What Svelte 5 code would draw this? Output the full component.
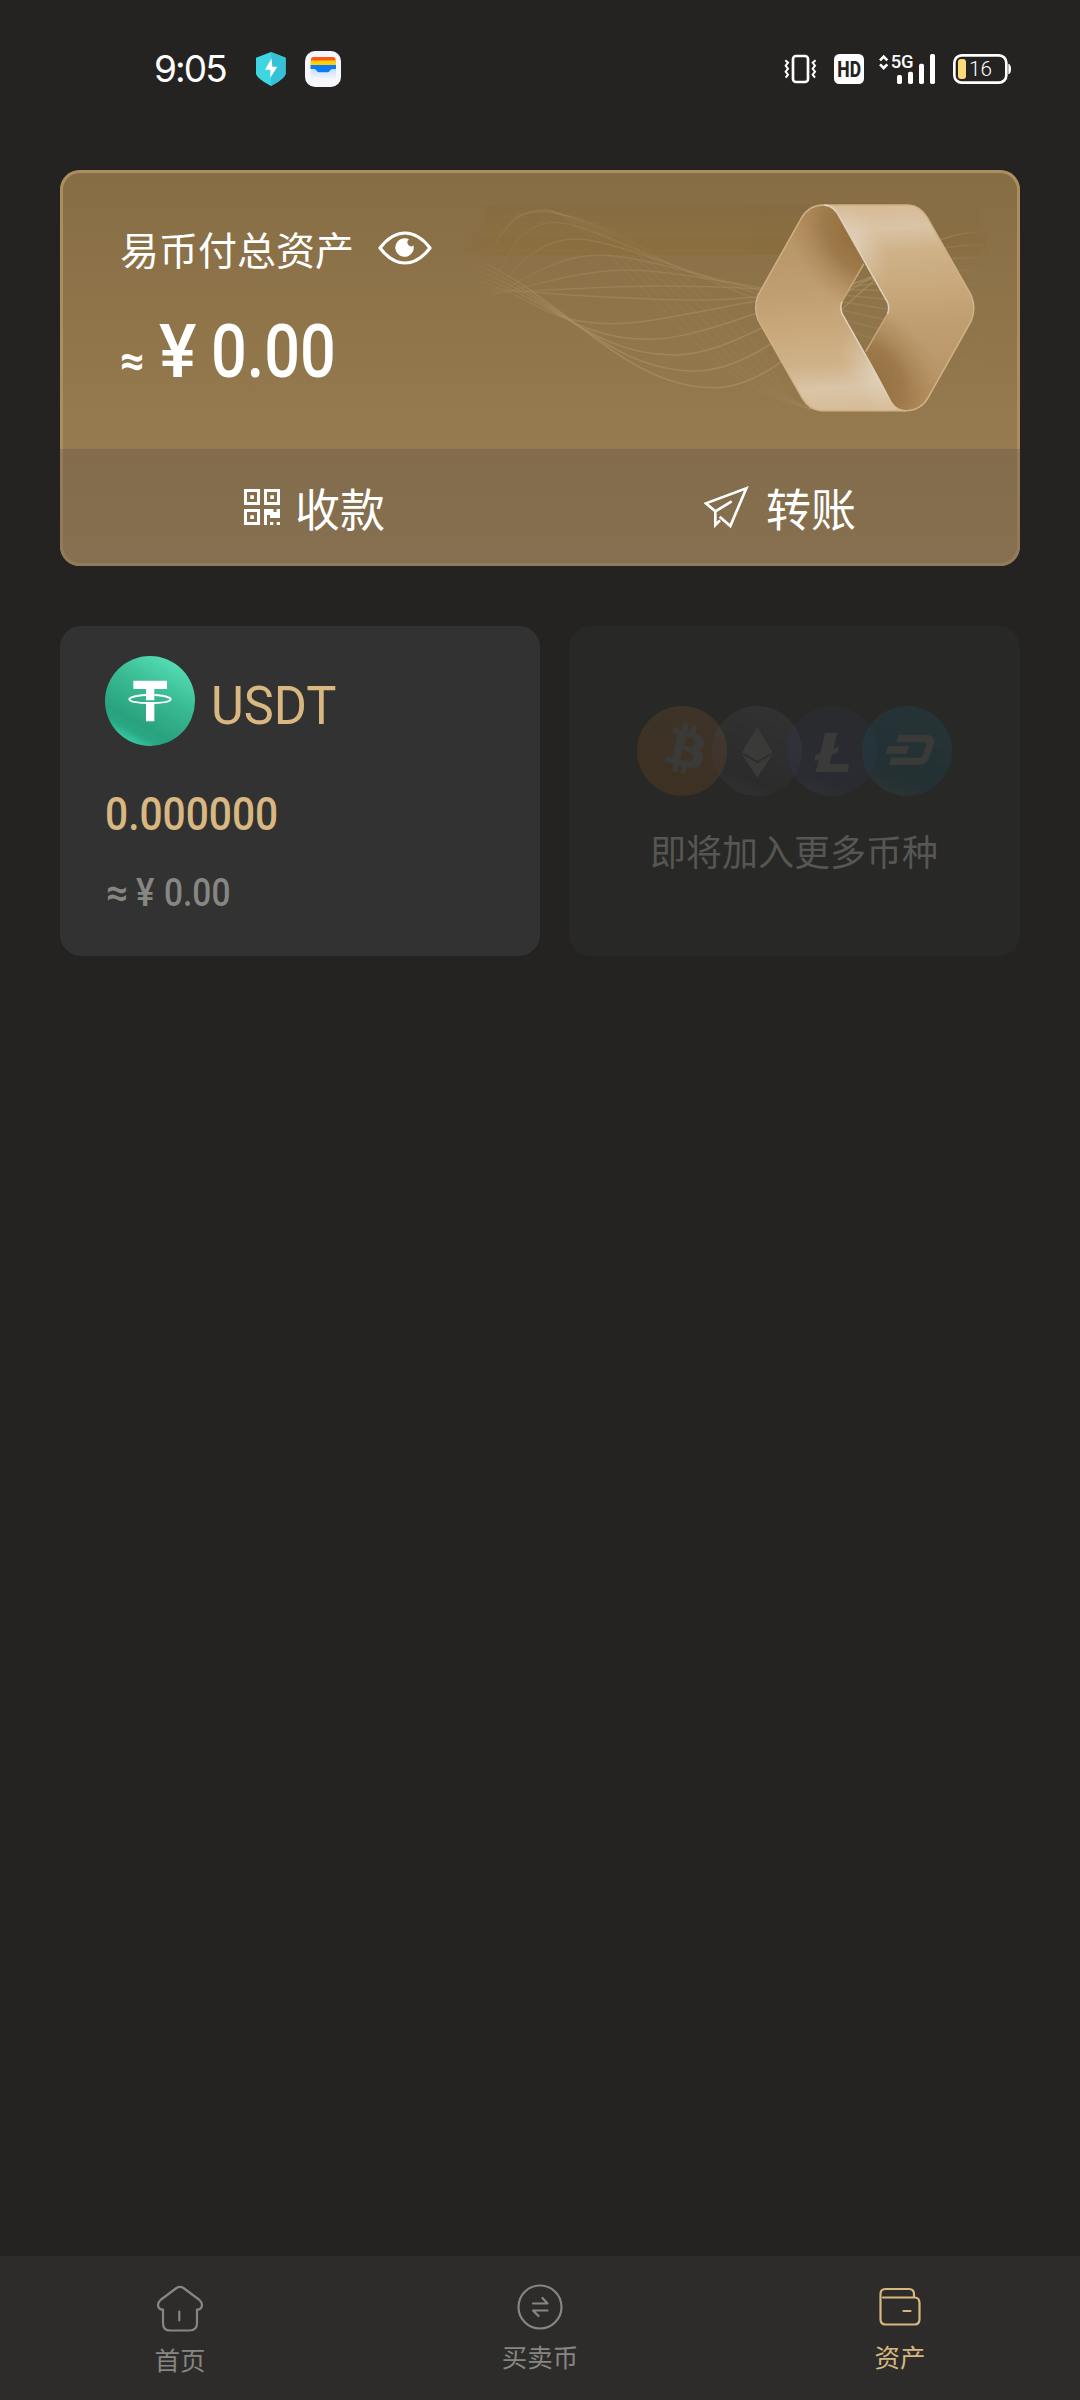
<script>
  const lerp = (a, b, t) => a + (b - a) * t;

  // crest / trough of every line in the main wave, left to right
  const crests = [
    [300, 187], [355, 237], [420, 286], [490, 331], [575, 378],
    [690, 420], [450, 491], [545, 538], [610, 585], [665, 633], [715, 683]
  ];

  const waves = crests.map(([x, y], i) => {
    const t = i / (crests.length - 1);
    const sx = lerp(85, 70, t);
    const sy = lerp(470, 285, t);
    const c1x = lerp(150, 320, t);
    const c1y = lerp(400, 400, t);
    const ey = lerp(610, 215, t);
    const dx = lerp(130, 240, t);
    return {
      d: `M${sx} ${sy}C${c1x} ${c1y} ${x - dx} ${y} ${x} ${y}S${lerp(850, 1130, t)} ${lerp(500, 215, t)} 1420 ${ey}`,
      opacity: lerp(0.28, 0.7, t)
    };
  });

  const threads = Array.from({ length: 7 }, (_, i) => {
    const t = i / 6;
    return `M${120 + i * 5} ${310 - i * 10}C${160 + i * 3} ${200 - i * 5} 210 ${150 - i} ${270 + i * 5} ${148 + i * 2}S${lerp(450, 560, t)} ${lerp(290, 250, t)} ${lerp(600, 740, t)} ${lerp(470, 450, t)}S850 ${lerp(720, 690, t)} 970 748`;
  });

  const tabs = [
    { id: "home", label: "首页" },
    { id: "trade", label: "买卖币" },
    { id: "assets", label: "资产" }
  ];

  let active = "assets";
</script>

<div class="screen">
  <header class="status">
    <span class="time">9:05</span>
    <svg class="shield" width="30" height="36" viewBox="378 66 90 108">
      <path fill="#3fd6e4" d="M423 69 467 86V133Q467 147 423 171 378 147 378 133V86Z" />
      <path fill="#35c1d6" d="M423 69 467 86V133Q467 147 423 171Z" />
      <path fill="#fff" d="M425 88 405 122H421L421 146 442 113H427Z" />
    </svg>
    <svg class="wallet-app" width="36" height="36" viewBox="0 0 36 36">
      <defs>
        <linearGradient id="flap" x2="0" y2="1">
          <stop stop-color="#b9d6fb" />
          <stop offset="1" stop-color="#f5f7fc" />
        </linearGradient>
      </defs>
      <rect width="36" height="36" rx="10" fill="#f6f7fc" />
      <path fill="#fa5a12" d="M6 12V8.500q0-2.500 2.500-2.500H28q2.500 0 2.500 2.500V12Z" />
      <path fill="#ffcf0a" d="M5.500 14V11q0-1.500 1.500-1.500H29.500q1.500 0 1.500 1.500V14Z" />
      <path fill="url(#flap)" d="M6 15H31V28H6Z" />
      <path fill="#0b7bfa" d="M5.500 14H31V18H27.500q-2 0-2.500 1.500-.7 1.800-2.500 1.800H14q-1.800 0-2.500-1.800Q11 18 9 18H5.500Z" />
    </svg>
    <svg class="vibrate" width="34" height="36" viewBox="42 63 102 108">
      <g fill="none" stroke="#fff">
        <rect x="69" y="78" width="45" height="78" rx="9" stroke-width="8" />
        <path stroke-width="6" d="M46 91 54 98 47 107 54 116 47 125 54 134 47 143M137 91 128 98 135 107 128 116 135 125 128 134 135 143" />
      </g>
    </svg>
    <svg class="hd" width="30" height="36" viewBox="192 63 90 108">
      <rect x="192" y="72" width="90" height="90" rx="16" fill="#fff" />
      <text x="202" y="140" font-size="64" font-weight="800" textLength="71" lengthAdjust="spacingAndGlyphs" fill="#242321">HD</text>
    </svg>
    <svg class="signal" width="57" height="36" viewBox="327 63 171 108">
      <path fill="none" stroke="#fff" stroke-width="8" d="M330 91 341 80 352 91M330 103 341 114 352 103" />
      <text x="362" y="115" font-size="57" font-weight="500" textLength="69" lengthAdjust="spacingAndGlyphs" fill="#fff">5G</text>
      <g fill="#fff">
        <rect x="381" y="135" width="15" height="27" rx="5" />
        <rect x="414" y="125" width="15" height="37" rx="5" />
        <rect x="447" y="101" width="15" height="61" rx="5" />
        <rect x="480" y="72" width="15" height="90" rx="5" />
      </g>
    </svg>
    <svg class="battery" width="59" height="36" viewBox="549 63 177 108">
      <rect x="553" y="76" width="156" height="82" rx="22" fill="none" stroke="#fff" stroke-width="8" />
      <rect x="564" y="87" width="24" height="60" rx="9" fill="#fddb78" />
      <text class="level" x="597" y="138" font-size="62" fill="#fff">16</text>
      <path fill="#fff" d="M715 101q8 2 8 16t-8 16Z" />
    </svg>
  </header>

  <section class="hero">
    <svg class="art" width="580" height="279" viewBox="0 30 1515 837" preserveAspectRatio="none">
      <defs>
        <linearGradient id="fade" gradientUnits="userSpaceOnUse" x1="60" x2="1440" y1="0" y2="0">
          <stop stop-color="#ab8e64" stop-opacity="0" />
          <stop offset=".2" stop-color="#ab8e64" />
          <stop offset=".85" stop-color="#ab8e64" />
          <stop offset="1" stop-color="#ab8e64" stop-opacity="0" />
        </linearGradient>
        <linearGradient id="band" gradientUnits="userSpaceOnUse" x1="960" y1="200" x2="1010" y2="752">
          <stop stop-color="#b99667" />
          <stop offset=".35" stop-color="#c1a074" />
          <stop offset=".55" stop-color="#cbaa7e" />
          <stop offset=".75" stop-color="#d2b48b" />
          <stop offset=".88" stop-color="#dcc8aa" />
          <stop offset="1" stop-color="#dabf9b" />
        </linearGradient>
        <radialGradient id="shade" gradientUnits="userSpaceOnUse" cx="0" cy="0" r="1" gradientTransform="translate(1085 235) rotate(62) scale(270 165)">
          <stop stop-color="#967040" />
          <stop offset=".4" stop-color="#9c7748" stop-opacity=".92" />
          <stop offset="1" stop-color="#b08a5a" stop-opacity="0" />
        </radialGradient>
        <radialGradient id="glow" gradientUnits="userSpaceOnUse" cx="0" cy="0" r="1" gradientTransform="translate(1140 640) rotate(62) scale(150 75)">
          <stop stop-color="#e6dac8" stop-opacity=".75" />
          <stop offset="1" stop-color="#dfceb4" stop-opacity="0" />
        </radialGradient>
        <path id="face" d="M1000 135C1022 135 1034 150 1043 170L1107 312 1050 425Q1044 442 1050 460L1175 715Q1190 750 1215 752H995Q965 750 946 714L831 480Q818 443 831 405L944 174Q963 136 1000 135Z" />
        <g id="half">
          <use href="#face" fill="url(#band)" />
          <use href="#face" fill="url(#shade)" />
          <use href="#face" fill="url(#glow)" />
          <path class="edge" stroke="#d3b488" d="M1215 752H995Q965 750 946 714L831 480Q818 443 831 405L944 174Q963 136 1000 135C1010 135 1020 137 1028 145" />
          <path class="edge" stroke="#c8a878" d="M1107 312 1050 425" />
          <path class="edge" stroke="#e4d6c0" d="M1050 425Q1044 442 1050 460L1175 715Q1190 750 1215 752" />
        </g>
      </defs>
      <g fill="none" stroke="url(#fade)">
        {#each threads as d}
          <path class="line" {d} opacity=".15" />
        {/each}
        {#each waves as wave}
          <path class="line" d={wave.d} opacity={wave.opacity} />
        {/each}
      </g>
      <use href="#half" opacity=".97" />
      <use href="#half" opacity=".97" transform="rotate(180 1109.500 443.500)" />
    </svg>

    <div class="total">
      <div class="caption">
        <span>易币付总资产</span>
        <svg width="54" height="34" viewBox="0 0 54 34">
          <path fill="none" stroke="#fff" stroke-width="3.200" stroke-linejoin="round" d="M2 17Q13.500 2 27 2T52 17Q40.500 32 27 32T2 17Z" />
          <path fill="#fff" d="M31 8.500A9.200 9.200 0 1 0 35.500 14.500 3.600 3.600 0 1 1 31 8.500Z" />
        </svg>
      </div>
      <div class="amount">
        <span class="approx">≈</span>
        <span class="yen">¥</span>
        <span class="value">0.00</span>
      </div>
    </div>

    <div class="actions">
      <button class="receive">
        <svg width="36" height="36" viewBox="0 0 36 36" fill="#fff">
          <path fill-rule="evenodd" d="M0 0H16V16H0ZM3 3V13H13V3ZM20 0H36V16H20ZM23 3V13H33V3ZM0 20H16V36H0ZM3 23V33H13V23Z" />
          <path d="M6.300 6.300h3.600v3.600H6.300ZM26.300 6.300h3.600v3.600h-3.600ZM6.300 26.300h3.600v3.600H6.300ZM20 20h9.500v3h3v-3H36v9H26v-3h-3v10h-3ZM26 33h3.300v3H26ZM32.700 33H36v3h-3.300Z" />
        </svg>
        <span>收款</span>
      </button>
      <button class="send">
        <svg width="45" height="43" viewBox="464 167 135 129">
          <path fill="none" stroke="#fff" stroke-width="8" stroke-linejoin="miter" d="M511 259 543 287 591 174 470 219 498 243V284L512 270M498 243 547 213" />
        </svg>
        <span>转账</span>
      </button>
    </div>
  </section>

  <section class="coins">
    <article class="coin">
      <div class="head">
        <svg width="90" height="90" viewBox="0 0 90 90">
          <defs>
            <linearGradient id="usdt" x1=".78" y1="0" x2=".25" y2=".98">
              <stop stop-color="#58e2b9" />
              <stop offset=".4" stop-color="#3abb94" />
              <stop offset=".76" stop-color="#29a37f" />
              <stop offset=".86" stop-color="#2aa682" />
              <stop offset="1" stop-color="#3ad6b3" />
            </linearGradient>
          </defs>
          <circle cx="45" cy="45" r="45" fill="url(#usdt)" />
          <g transform="translate(-55 -46) scale(.33333)">
            <path fill="#fff" d="M250 212H351V237H313V271H288V237H250ZM288 277H313V334H288Z" />
            <path fill="none" stroke="#fff" stroke-width="6" d="M288 255C215 260 225 279 300 279S385 260 313 255" />
          </g>
        </svg>
        <span class="name">USDT</span>
      </div>
      <div class="balance">0.000000</div>
      <div class="worth">
        <span class="approx">≈</span>
        <span class="yen">¥</span>
        <span class="value">0.00</span>
      </div>
    </article>

    <article class="more">
      <svg width="315" height="90" viewBox="0 0 315 90">
        <defs>
          <linearGradient id="btc" x1=".7" y1="0" x2=".3" y2="1">
            <stop stop-color="#d68434" />
            <stop offset="1" stop-color="#d67014" />
          </linearGradient>
          <linearGradient id="eth" x1=".7" y1="0" x2=".3" y2="1">
            <stop stop-color="#817c92" />
            <stop offset=".8" stop-color="#48465a" />
            <stop offset="1" stop-color="#777583" />
          </linearGradient>
          <linearGradient id="ltc" x1=".7" y1="0" x2=".3" y2="1">
            <stop stop-color="#3c4070" />
            <stop offset=".8" stop-color="#35427c" />
            <stop offset="1" stop-color="#6672a0" />
          </linearGradient>
          <linearGradient id="dash" x1=".7" y1="0" x2=".3" y2="1">
            <stop stop-color="#1787b8" />
            <stop offset=".8" stop-color="#0a6d8e" />
            <stop offset="1" stop-color="#508a9c" />
          </linearGradient>
        </defs>
        <g class="dim">
          <circle cx="45" cy="45" r="45" fill="url(#btc)" />
          <path class="mark" transform="translate(8.500 3.100) scale(3.400)" d="M17.189 10.168c.238-1.598-.98-2.457-2.645-3.030l.54-2.168-1.320-.33-.527 2.110c-.346-.086-.702-.168-1.056-.248l.53-2.124-1.318-.33-.54 2.168c-.287-.066-.569-.13-.843-.2l-1.817-.461-.35 1.407s.977.224.957.238c.534.134.63.487.614.767l-1.480 5.938c-.065.162-.23.405-.604.313l-.957-.239L5.720 15.490l1.715.427c.319.08.631.163.938.242l-.545 2.190 1.317.328.54-2.167c.36.098.708.188 1.050.273l-.538 2.157 1.319.328.545-2.186c2.248.425 3.938.254 4.650-1.780.573-1.638-.029-2.582-1.211-3.198.861-.199 1.510-.765 1.683-1.936zm-3.012 4.223c-.407 1.638-3.163.752-4.057.53l.724-2.903c.894.224 3.760.665 3.333 2.373zm.408-4.247c-.372 1.489-2.667.732-3.410.547l.656-2.633c.744.185 3.140.53 2.754 2.086z" />
        </g>
        <g class="dim">
          <circle cx="120" cy="45" r="45" fill="url(#eth)" />
          <path class="mark" transform="translate(-17 -16) scale(.33333)" d="M412 112 457 187 412 212 366 187ZM366 193 412 220 457 193 412 263Z" />
        </g>
        <g class="dim">
          <circle cx="195" cy="45" r="45" fill="url(#ltc)" />
          <path class="mark" transform="translate(-17 -16) scale(.33333)" d="M615 129H652L640 176 657 170 653 187 636 194 628 222H687L683 246H587L596 208 583 213 586 196 601 190Z" />
        </g>
        <g class="dim">
          <circle cx="270" cy="45" r="45" fill="url(#dash)" />
          <path class="mark" transform="translate(-17 -16) scale(.33333)" d="M836 134H920Q947 136 941 162L929 200Q920 224 895 225H808L815 203H900Q906 203 908 196L919 163Q920 157 914 157H829ZM804 168H867L860 191H797Z" />
        </g>
      </svg>
      <p>即将加入更多币种</p>
    </article>
  </section>

  <nav>
    {#each tabs as { id, label } (id)}
      <button class="tab {id}" class:active={active === id} on:click={() => (active = id)}>
        {#if id === "home"}
          <svg width="48" height="48" viewBox="0 0 48 48">
            <path d="M7 24.500C1.500 25 .5 18.500 4.500 15L20.500 3Q24 .7 27.500 3L43.500 15C47.500 18.500 46.500 25 41 24.500V38Q41 45.500 33.500 45.500H14Q7 45.500 7 38V24.500" />
            <path d="M23.300 26.500V35.500" />
          </svg>
        {:else if id === "trade"}
          <svg width="48" height="48" viewBox="0 0 48 48">
            <circle cx="24" cy="24" r="21.500" />
            <path d="M17 20.500H31.500L26.500 15M31.500 27.500H17L22.500 33" />
          </svg>
        {:else}
          <svg width="48" height="48" viewBox="0 0 48 48">
            <path d="M7 14.500H38.500Q43.500 14.500 43.500 20V36Q43.500 41.500 38.500 41.500H9.500Q4.500 41.500 4.500 36V11Q4.500 6 9.500 6H33Q38 6 38 11V14.500M27.500 28H34.500" />
          </svg>
        {/if}
        <span>{label}</span>
      </button>
    {/each}
  </nav>
</div>

<style>
  :global(body) {
    background: #242321;
  }

  .screen {
    display: flex;
    flex-direction: column;
    width: 1080px;
    height: 2400px;
    background: #242321;
    color: #fff;
    font-family: Roboto, "Noto Sans CJK SC", sans-serif;
  }

  button {
    margin: 0;
    padding: 0;
    border: 0;
    background: none;
    color: inherit;
    font-family: "Noto Sans CJK SC", sans-serif;
    cursor: pointer;
  }

  svg {
    display: block;
    flex: none;
  }

  .status {
    display: flex;
    align-items: center;
    box-sizing: border-box;
    height: 170px;
    padding: 51px 68px 83px 154px;
  }

  .status svg {
    overflow: visible;
  }

  .time {
    width: 102px;
    font-family: Inter, sans-serif;
    font-size: 37px;
    line-height: 36px;
    letter-spacing: -1.9px;
  }

  .level {
    font-family: Roboto, sans-serif;
    font-weight: 300;
  }

  .wallet-app {
    margin-left: 19px;
  }

  .vibrate {
    margin-left: auto;
  }

  .hd {
    margin-left: 16px;
  }

  .signal {
    margin-left: 15px;
  }

  .battery {
    margin-left: 17px;
  }

  .hero {
    position: relative;
    display: flex;
    flex-direction: column;
    height: 396px;
    margin: 0 60px;
    border-radius: 20px;
    overflow: hidden;
    background: linear-gradient(#876d44, #94794e 60%, #9a7e54);
    box-shadow: inset 0 0 0 3px #ab8d60;
  }

  .art {
    position: absolute;
    top: 0;
    right: 0;
  }

  .line {
    stroke-width: 1.5px;
    vector-effect: non-scaling-stroke;
  }

  .edge {
    fill: none;
    stroke-width: 1.5px;
    vector-effect: non-scaling-stroke;
  }

  .total {
    position: relative;
    height: 279px;
  }

  .caption {
    display: flex;
    align-items: center;
    gap: 24px;
    padding: 56px 0 0 60px;
    font-family: "Noto Sans CJK SC", sans-serif;
    font-size: 39px;
    line-height: 44px;
  }

  .caption svg {
    margin-top: -1px;
  }

  .amount,
  .worth {
    display: flex;
    align-items: baseline;
    white-space: nowrap;
  }

  .amount {
    margin: 31px 0 0 60px;
    font-size: 75px;
    font-weight: 500;
    line-height: 100px;
  }

  .amount span,
  .worth span,
  .balance,
  .name {
    display: block;
    transform-origin: left;
  }

  .amount .approx {
    width: 39px;
    font-size: 42px;
    font-weight: 900;
    transform: translateY(-2px);
  }

  .amount .yen {
    width: 52px;
    transform: scaleX(0.94);
  }

  .amount .value {
    transform: scaleX(0.84);
  }

  .actions {
    position: relative;
    display: grid;
    grid-template-columns: 1fr 1fr;
    height: 117px;
    background: rgba(55, 55, 65, 0.2);
  }

  .actions button {
    display: flex;
    align-items: center;
    font-size: 45px;
    line-height: 60px;
  }

  .receive {
    padding-left: 184px;
    gap: 15px;
  }

  .receive svg {
    margin-top: -2px;
  }

  .send {
    padding-left: 164px;
    gap: 17px;
  }

  .send svg {
    margin-top: -1px;
  }

  .coins {
    display: grid;
    grid-template-columns: 480px 451px;
    gap: 29px;
    margin: 60px 60px 0;
    height: 330px;
  }

  .coin,
  .more {
    box-sizing: border-box;
    border-radius: 21px;
  }

  .coin {
    padding: 30px 45px;
    background: #323232;
  }

  .head {
    display: flex;
    gap: 16px;
  }

  .name {
    margin-top: 18px;
    color: #d9b780;
    font-size: 53.5px;
    font-weight: 450;
    line-height: 64px;
    transform: scaleX(0.945);
  }

  .balance {
    margin-top: 38px;
    color: #d9b780;
    font-size: 46.5px;
    font-weight: 500;
    line-height: 60px;
    transform: scaleX(0.875);
  }

  .worth {
    margin-top: 25px;
    color: #868682;
    font-size: 38.5px;
    font-weight: 500;
    line-height: 48px;
  }

  .worth .approx {
    width: 30px;
    font-weight: 700;
    transform: translateX(1px);
  }

  .worth .yen {
    width: 29px;
    transform: translateX(1px) scaleX(0.9);
  }

  .worth .value {
    transform: scaleX(0.87);
  }

  .more {
    display: flex;
    flex-direction: column;
    align-items: center;
    padding-top: 80px;
    background: #282826;
  }

  .dim {
    opacity: 0.12;
  }

  .mark {
    fill: #bebeb6;
  }

  .more p {
    margin: 30px 1px 0 0;
    color: #565653;
    font-family: "Noto Sans CJK SC", sans-serif;
    font-size: 36px;
    line-height: 48px;
  }

  nav {
    display: grid;
    grid-template-columns: repeat(3, 1fr);
    height: 144px;
    margin-top: auto;
    background: #2d2c2a;
  }

  .tab {
    display: flex;
    flex-direction: column;
    align-items: center;
    padding-top: 27px;
    color: #868682;
    font-size: 25.5px;
    line-height: 36px;
  }

  .tab svg {
    margin-bottom: 7px;
    fill: none;
    stroke: currentColor;
    stroke-width: 2.2;
    stroke-linecap: round;
    stroke-linejoin: round;
  }

  .home {
    padding-top: 29px;
  }

  .home svg {
    margin-bottom: 8px;
  }

  .active {
    color: #d9b780;
  }
</style>
